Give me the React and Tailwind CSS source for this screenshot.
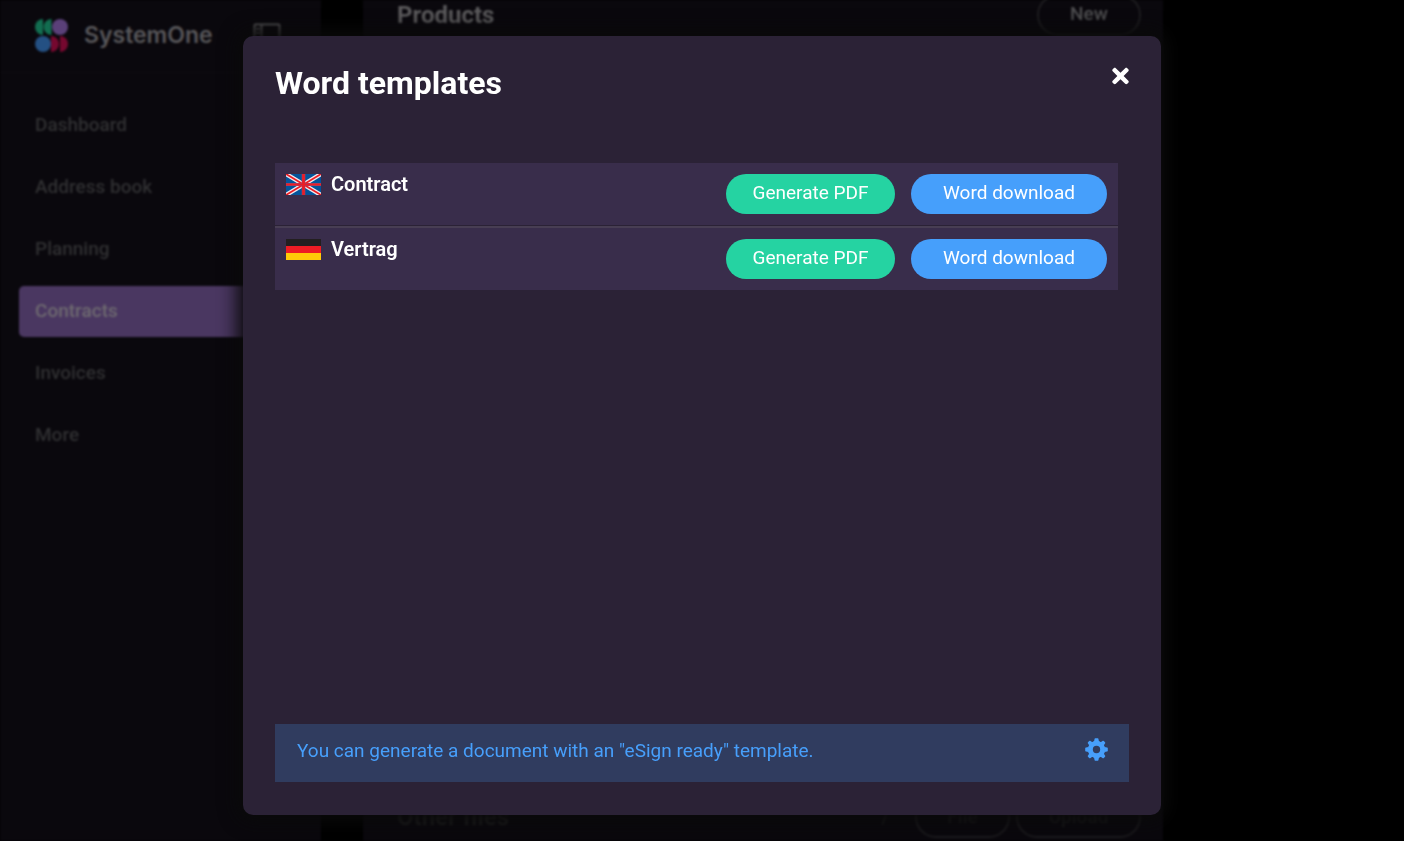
import React from "react";
import { FaTimes } from "react-icons/fa";

const navItems = ["Dashboard", "Address book", "Planning", "Contracts", "Invoices", "More"];

function Logo() {
  return (
    <svg viewBox="0 0 33 33" className="size-[33px] shrink-0" aria-hidden="true">
      <path d="M8 0a8 8 0 0 0 0 16z" fill="#126d50" />
      <path d="M16.5 0a8 8 0 0 0 0 16z" fill="#126d50" />
      <circle cx="25" cy="8" r="8" fill="#5a4079" />
      <circle cx="8" cy="25" r="8" fill="#245083" />
      <path d="M16 17a8 8 0 0 1 0 16z" fill="#76082f" />
      <path d="M25 17a8 8 0 0 1 0 16z" fill="#76082f" />
    </svg>
  );
}

function PanelIcon() {
  return (
    <svg viewBox="0 0 28 24" className="h-6 w-7" fill="none" stroke="currentColor" strokeWidth="2" aria-hidden="true">
      <rect x="1.5" y="1.5" width="25" height="21" rx="1" />
      <path d="M8.5 1.5v21M3.5 6h3M3.5 10h3" />
    </svg>
  );
}

function BritishFlag() {
  return (
    <svg viewBox="0 0 35 21" className="h-[21px] w-[35px] shrink-0" role="img" aria-label="English">
      <path d="M0 0h35v21H0z" fill="#03549a" />
      <path d="M0 0l35 21M35 0L0 21" stroke="#f1e9ee" strokeWidth="4.4" />
      <path d="M0 0l35 21M35 0L0 21" stroke="#ed1c24" strokeWidth="1.7" />
      <path d="M0 10.5h35" stroke="#a63f61" strokeWidth="3" />
      <path d="M17.5 0v21" stroke="#a63f61" strokeWidth="3.6" />
      <path d="M0 10.5h35" stroke="#ed1c24" strokeWidth="1.6" />
      <path d="M17.5 0v21" stroke="#ed1c24" strokeWidth="2.4" />
    </svg>
  );
}

function GermanFlag() {
  return (
    <svg viewBox="0 0 35 21" className="h-[21px] w-[35px] shrink-0" role="img" aria-label="Deutsch">
      <path d="M0 0h35v7H0z" fill="#231f20" />
      <path d="M0 7h35v7H0z" fill="#ed1c24" />
      <path d="M0 14h35v7H0z" fill="#ffcb08" />
    </svg>
  );
}

function Gear() {
  return (
    <svg viewBox="-11.5 -11.5 23 23" className="size-[23px]" fill="currentColor" aria-hidden="true">
      <path fillRule="evenodd" d="M0-8.5a8.5 8.5 0 1 0 0 17a8.5 8.5 0 1 0 0-17zM0-3.7a3.7 3.7 0 1 1 0 7.4a3.7 3.7 0 1 1 0-7.4z" />
      {[0, 90, 180, 270].map((a) => (
        <path key={a} transform={`rotate(${a})`} d="M-3.2-7.6L-2.2-9L-2-10.6Q-1.9-11.3-1.2-11.3H1.2Q1.9-11.3 2-10.6L2.2-9L3.2-7.6z" />
      ))}
      {[45, 135, 225, 315].map((a) => (
        <path key={a} transform={`rotate(${a})`} d="M-3-7.4L-2-9L-1.7-10.6Q-1.5-11.2-.8-11.2H.8Q1.5-11.2 1.7-10.6L2-9L3-7.4z" />
      ))}
    </svg>
  );
}

const templates = [
  { name: "Contract", Flag: BritishFlag },
  { name: "Vertrag", Flag: GermanFlag },
];

function Sidebar() {
  return (
    <aside className="w-[321px] shrink-0 bg-[#0a080d]">
      <div className="flex h-[73px] items-center border-b border-[#0d0b10] pr-10 pb-[2px] pl-[35px]">
        <Logo />
        <span className="ml-4 font-['Inter',sans-serif] text-[23px] leading-7 font-semibold text-[#58575a]">SystemOne</span>
        <button type="button" aria-label="Toggle sidebar" className="ml-auto text-[#555457]">
          <PanelIcon />
        </button>
      </div>
      <nav className="flex flex-col gap-[11px] px-[19px] pt-[27px]">
        {navItems.map((item) => (
          <a
            key={item}
            href="#"
            className={
              item === "Contracts"
                ? "flex h-[51px] items-center rounded-[5px] bg-[#4a3761] px-4 text-[#6e6a70]"
                : "flex h-[51px] items-center rounded-[5px] px-4 text-[#303032]"
            }
          >
            {item}
          </a>
        ))}
      </nav>
    </aside>
  );
}

function Content() {
  return (
    <main className="flex w-[800px] shrink-0 flex-col justify-between bg-[#0a080d] pr-[22px] pb-[3px] pl-[34px]">
      <section className="-mt-[6px] flex h-[42px] items-center justify-between">
        <h2 className="text-2xl font-bold text-[#5b5a5c]">Products</h2>
        <button type="button" className="h-[42px] w-[104px] rounded-full border-2 border-[#1e1d20] pb-[2px] text-[#505052]">New</button>
      </section>
      <section className="flex h-[42px] items-center gap-[6px]">
        <h2 className="text-2xl font-bold text-[#1c1c1d]">Other files</h2>
        <span className="mr-5 ml-auto text-[#1c1c1d]">/</span>
        <button type="button" className="h-[42px] w-[95px] rounded-full border-2 border-[#1c1b1e] text-[#1a1a1b]">File</button>
        <button type="button" className="h-[42px] w-[125px] rounded-full border-2 border-[#1c1b1e] text-[#1a1a1b]">Upload</button>
      </section>
    </main>
  );
}

function TemplatesDialog() {
  return (
    <div
      role="dialog"
      aria-modal="true"
      aria-labelledby="dialog-title"
      className="flex w-full max-w-[918px] flex-col rounded-[10px] bg-[#2b2236] px-8 pt-7 pb-[33px] shadow-[0_0_18px_6px_#0a0a0a]"
    >
      <header className="flex items-start justify-between">
        <h1 id="dialog-title" className="text-[32px] leading-[38px] font-bold text-white">Word templates</h1>
        <button type="button" aria-label="Close" className="flex h-6 w-[17px] items-center justify-center text-2xl text-white">
          <FaTimes />
        </button>
      </header>
      <ul className="mt-[61px] mr-[11px] flex flex-col gap-px">
        {templates.map(({ name, Flag }, i) => (
          <li
            key={name}
            className={
              i === 0
                ? "flex items-start bg-[#392d4b] p-[11px]"
                : "flex items-start border-t-2 border-[#483e53] bg-[#392d4b] p-[11px]"
            }
          >
            <Flag />
            <span className="ml-[10px] text-xl leading-[21px] font-semibold text-white">{name}</span>
            <div className="ml-auto flex gap-4">
              <button type="button" className="h-10 w-[169px] rounded-full bg-[#25d3a2] pb-[2px] text-[19px] text-white">Generate PDF</button>
              <button type="button" className="h-10 w-[196px] rounded-full bg-[#469ffb] pb-[2px] text-[19px] text-white">Word download</button>
            </div>
          </li>
        ))}
      </ul>
      <footer className="mt-auto flex h-[58px] items-start justify-between bg-[#303c5f] pt-[14px] pr-[21px] pl-[22px] text-[#479ffb]">
        <p className="text-[19px] leading-[26px]">You can generate a document with an "eSign ready" template.</p>
        <button type="button" aria-label="Template settings">
          <Gear />
        </button>
      </footer>
    </div>
  );
}

export default function App() {
  return (
    <div className="relative h-screen overflow-hidden bg-black font-['Roboto',sans-serif]">
      <div className="flex h-full gap-[42px] text-[19px] font-medium blur-[1px]">
        <Sidebar />
        <Content />
      </div>
      <div className="absolute inset-0 flex justify-center pt-9 pb-[26px]">
        <TemplatesDialog />
      </div>
    </div>
  );
}
